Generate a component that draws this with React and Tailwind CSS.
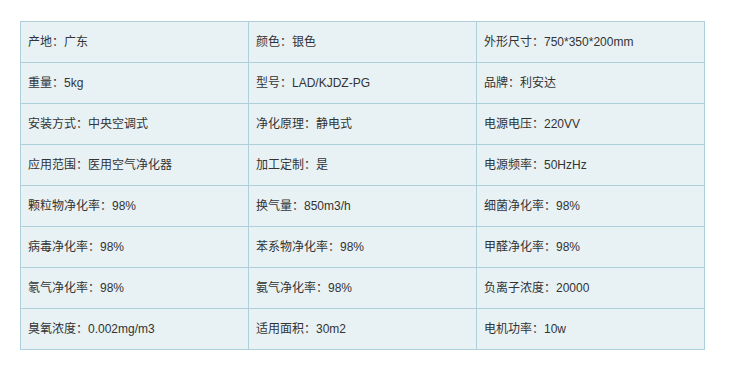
const rows = [
  ["产地：广东", "颜色：银色", "外形尺寸：750*350*200mm"],
  ["重量：5kg", "型号：LAD/KJDZ-PG", "品牌：利安达"],
  ["安装方式：中央空调式", "净化原理：静电式", "电源电压：220VV"],
  ["应用范围：医用空气净化器", "加工定制：是", "电源频率：50HzHz"],
  ["颗粒物净化率：98%", "换气量：850m3/h", "细菌净化率：98%"],
  ["病毒净化率：98%", "苯系物净化率：98%", "甲醛净化率：98%"],
  ["氡气净化率：98%", "氨气净化率：98%", "负离子浓度：20000"],
  ["臭氧浓度：0.002mg/m3", "适用面积：30m2", "电机功率：10w"],
];

export default function App() {
  return (
    <div
      className="w-[749px] h-[366px] bg-white pt-[21px] pl-[20px]"
      style={{ fontFamily: '"Liberation Sans", "Noto Sans CJK SC", sans-serif' }}
    >
      <table className="border-collapse table-fixed w-[685px] text-[12px] text-[#333]">
        <tbody>
          {rows.map((row, i) => (
            <tr key={i} className="h-[41px]">
              {row.map((cell, j) => (
                <td
                  key={j}
                  className="border border-[#aed0da] bg-[#e8f2f5] pl-[7px] py-0 align-middle whitespace-nowrap"
                >
                  {cell}
                </td>
              ))}
            </tr>
          ))}
        </tbody>
      </table>
    </div>
  );
}
